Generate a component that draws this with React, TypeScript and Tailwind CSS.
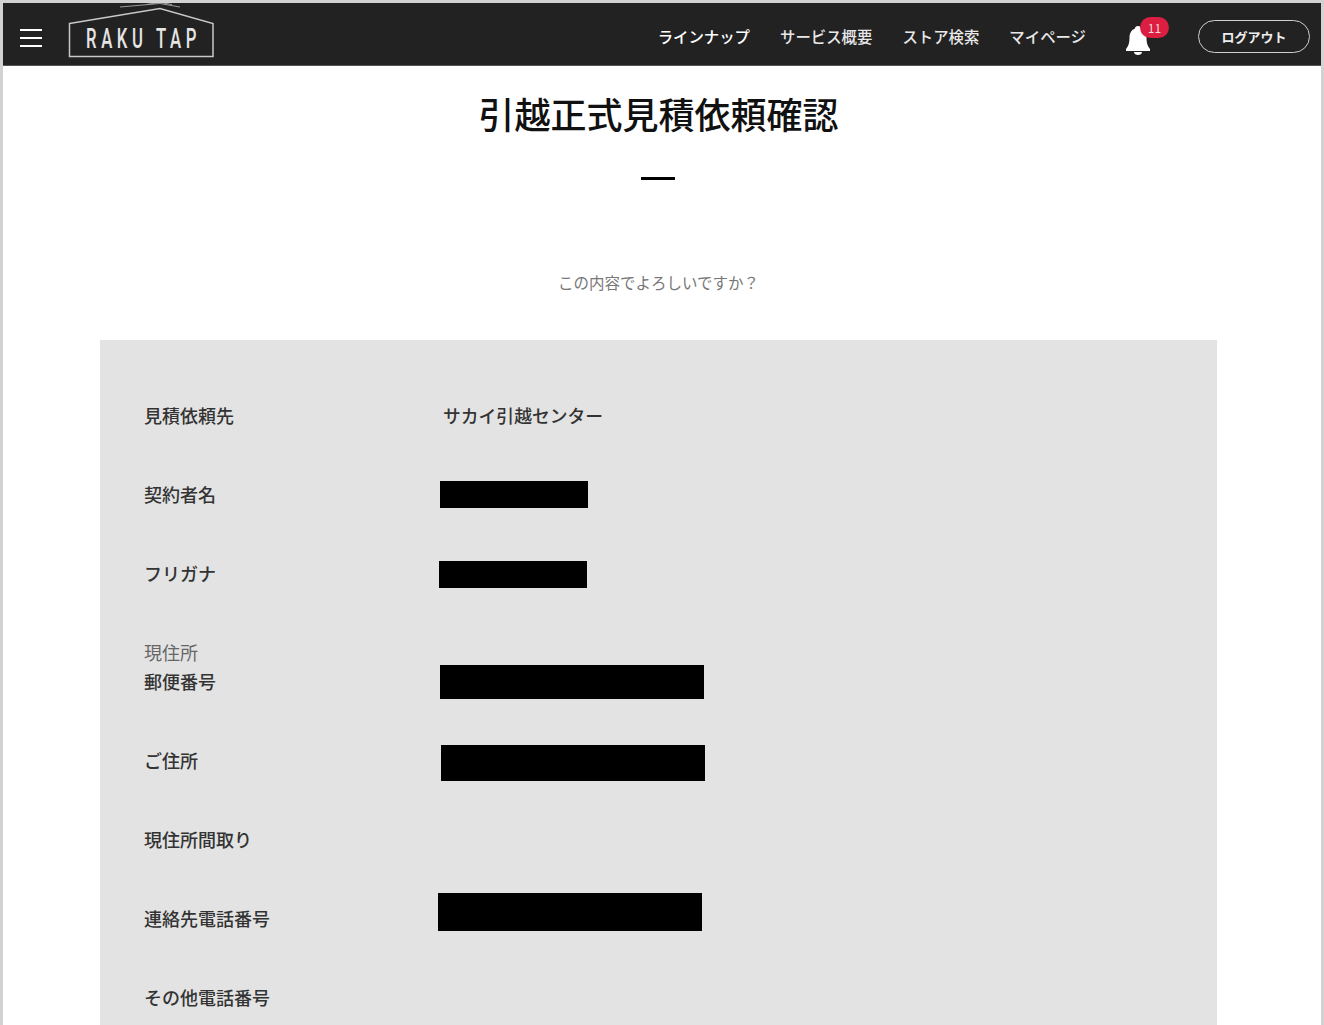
const jp = "font-['Noto_Sans_CJK_JP','Noto_Sans',sans-serif]";

function Logo() {
  return (
    <svg width="150" height="60" viewBox="0 0 150 60" className="block shrink-0" fill="none">
      <path d="M1.500 21.500 L92 6.500 L145 21.500 V54.500 H1.500 Z" stroke="#c8c8c8" strokeWidth="1.500" />
      <path d="M52 5 L92 1.500 L112 5 M78 2.500 L92 .5 L104 2.500" stroke="#9a9a9a" strokeWidth="1" />
      <g transform="translate(18 45.500) scale(0.62 1)">
        <text
          x="0"
          y="0"
          fill="#e4e4e4"
          fontFamily="Roboto, sans-serif"
          fontSize="27"
          fontWeight="500"
          textLength="178"
          lengthAdjust="spacing"
        >
          RAKU TAP
        </text>
      </g>
    </svg>
  );
}

function BellIcon() {
  return (
    <svg width="24" height="29" viewBox="0 0 24 29" className="block" fill="white">
      <path d="M12 0 C14 0 15 1 15 2.500 C19 4 20.500 7.500 20.500 12 C20.500 17 21.500 20 24 23 V25 H0 V23 C2.500 20 3.500 17 3.500 12 C3.500 7.500 5 4 9 2.500 C9 1 10 0 12 0 Z" />
      <path d="M8 26 H16 C16 28 14 29 12 29 C10 29 8 28 8 26 Z" />
    </svg>
  );
}

function Row({ label, value, box }: { label: string; value?: string; box?: string }) {
  return (
    <div className="flex h-6 items-center mb-[55px]">
      <div className="w-[299px] shrink-0 text-[18px] leading-6 font-medium text-[#333]">{label}</div>
      {value && <div className="text-[17.8px] leading-6 font-medium text-[#333]">{value}</div>}
      {box && <div className={box} />}
    </div>
  );
}

export default function App() {
  return (
    <div className={`h-[1025px] overflow-hidden bg-white border-t-[3px] border-x-[3px] border-[#d2d2d2] ${jp}`}>
      <header className="h-[63px] flex items-center bg-[#222222] border-b border-[#555555] pl-[17px] pr-[11px]">
        <div className="flex flex-col gap-[6px] w-[22px] shrink-0 mt-[7px]">
          <span className="h-[2px] bg-white" />
          <span className="h-[2px] bg-white" />
          <span className="h-[2px] bg-white" />
        </div>
        <div className="ml-[26px] -mt-[5px]">
          <Logo />
        </div>
        <nav className="ml-auto mt-[6px] flex items-center gap-[30px] text-[15.4px] font-medium text-white">
          <a>ラインナップ</a>
          <a className="text-[#e8e8e8]">サービス概要</a>
          <a className="text-[#e8e8e8]">ストア検索</a>
          <a className="text-[#e8e8e8]">マイページ</a>
        </nav>
        <div className="relative ml-[40px] w-[24px] h-[29px] mt-[12px]">
          <BellIcon />
          <span className="absolute left-[14px] -top-[9px] w-[29px] h-[21px] rounded-full bg-[#dc1e42] text-[12px] leading-[21px] text-center text-[#f5d5d5]">
            11
          </span>
        </div>
        <button className="ml-[48px] w-[112px] h-[33px] mt-[4px] pt-[2px] rounded-full border border-[#cfcfcf] text-[13px] font-bold text-[#eeeeee]">
          ログアウト
        </button>
      </header>
      <main className="pl-[97px] pr-[104px]">
        <h1 className="pt-[20px] text-center text-[36px] leading-[54px] font-medium text-[#111111]">引越正式見積依頼確認</h1>
        <div className="mx-auto mt-[37px] w-[34px] h-[3px] bg-black -translate-x-[1px]" />
        <p className="mt-[90px] text-center text-[15.5px] leading-6 text-[#777777]">この内容でよろしいですか？</p>
        <section className="mt-[46px] bg-[#e3e3e3] pl-[44px] pt-[63px] pb-[40px]">
          <Row label="見積依頼先" value="サカイ引越センター" />
          <Row label="契約者名" box="-ml-[3px] mt-[1px] w-[148px] h-[27px] bg-black" />
          <Row label="フリガナ" box="-ml-[4px] mt-[2px] w-[148px] h-[27px] bg-black" />
          <div className="h-6 mb-[5px] text-[18px] leading-6 text-[#666666]">現住所</div>
          <Row label="郵便番号" box="-ml-[3px] mt-[2px] w-[264px] h-[34px] bg-black" />
          <Row label="ご住所" box="-ml-[2px] mt-[6px] w-[264px] h-[36px] bg-black" />
          <Row label="現住所間取り" />
          <Row label="連絡先電話番号" box="-ml-[5px] mb-[12px] w-[264px] h-[38px] bg-black" />
          <Row label="その他電話番号" />
        </section>
      </main>
    </div>
  );
}
